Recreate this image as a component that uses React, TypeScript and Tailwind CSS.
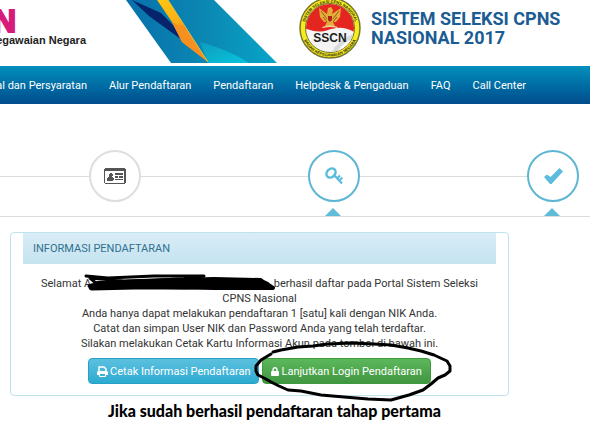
import type { ReactNode } from 'react';
import { FaLock } from 'react-icons/fa';

const menu = ['Alur Pendaftaran', 'Pendaftaran', 'Helpdesk & Pengaduan', 'FAQ', 'Call Center'];

function Ribbon() {
  return (
    <svg viewBox="0 0 152 63" className="h-[63px] w-[152px] shrink-0" aria-hidden="true">
      <defs>
        <linearGradient id="ribbon" x1="0" y1="0" x2="1" y2="0">
          <stop offset="0" stopColor="#0870ab" />
          <stop offset="0.5" stopColor="#0b86b2" />
          <stop offset="1" stopColor="#08a5c8" />
        </linearGradient>
        <linearGradient id="gold" x1="0" y1="0" x2="0.6" y2="1">
          <stop offset="0" stopColor="#fdc70f" />
          <stop offset="0.45" stopColor="#fbae17" />
          <stop offset="0.55" stopColor="#f58a1c" />
          <stop offset="1" stopColor="#f7931e" />
        </linearGradient>
        <linearGradient id="shine" x1="0" y1="0" x2="1" y2="1">
          <stop offset="0" stopColor="#0e9dbd" />
          <stop offset="1" stopColor="#07c3dc" />
        </linearGradient>
      </defs>
      <path d="M1 0H89L152 63H46Z" fill="url(#ribbon)" />
      <path d="M7 0L36 13L48 25L57 40L24 16Z" fill="#06246b" />
      <path d="M75 42Q105 50 124 63H83Z" fill="url(#shine)" />
      <path d="M32 0H43L83 62L57 42L47 22Z" fill="url(#gold)" />
      <path d="M47 22L62 30L83 62L57 42Z" fill="#f7901e" />
      <path d="M43 0L83 62" stroke="#d6c24a" fill="none" />
    </svg>
  );
}

function Emblem() {
  return (
    <svg viewBox="0 0 62 62" className="h-[62px] w-[62px] shrink-0" role="img" aria-label="SSCN">
      <defs>
        <clipPath id="disc"><circle cx="31" cy="31" r="24" /></clipPath>
        <path id="arcTop" d="M5.500 37A26 26 0 1 1 56.500 37" />
        <path id="arcBottom" d="M3 38A29 29 0 0 0 59 38" />
      </defs>
      <circle cx="31" cy="31" r="30" fill="#f7ec1a" stroke="#77772f" strokeWidth="1.5" />
      <circle cx="31" cy="31" r="24.5" fill="#f4f4f4" stroke="#77752a" strokeWidth="1" />
      <g clipPath="url(#disc)">
        <path d="M5 5H57V36C46 29 38 30 29 33C20 36 13 34 5 31Z" fill="#e52520" />
        <path d="M32 58Q34 46 56 36V50Q46 58 32 60Z" fill="#dadada" />
        <path d="M37 57Q44 44 55 42Q48 50 37 57Z" fill="#fff" />
      </g>
      {/* garuda */}
      <g fill="#e3ad3c">
        <path d="M29 11L32 10L34 13L33 17L42 11L41 20L37 25L34 25L36 29H26L28 25H25L21 20L20 11L28 17Z" />
        <path d="M23 30Q31 27 39 30L38 31Q31 29 24 31Z" fill="#f0d8a0" />
        <path d="M22 14L28 22M40 14L34 22M24 20L28 25M38 20L34 25" stroke="#8c4a18" strokeWidth="0.8" />
        <path d="M29 19H33V23L31 25L29 23Z" fill="#b52118" />
      </g>
      <text x="31" y="45" textAnchor="middle" fontSize="12" fontWeight="900" fill="#1d1d1d" className="font-['Liberation_Sans',sans-serif]">SSCN</text>
      <text fontSize="4" fontWeight="700" fill="#29291a" className="font-['Liberation_Sans',sans-serif]">
        <textPath href="#arcTop" startOffset="50%" textAnchor="middle">SISTEM SELEKSI CPNS NASIONAL</textPath>
      </text>
      <text fontSize="4" fontWeight="700" fill="#29291a" className="font-['Liberation_Sans',sans-serif]">
        <textPath href="#arcBottom" startOffset="50%" textAnchor="middle">BADAN KEPEGAWAIAN NEGARA</textPath>
      </text>
    </svg>
  );
}

function IdCardIcon() {
  return (
    <svg viewBox="0 0 22 16" className="h-4 w-[22px]" shapeRendering="crispEdges" aria-hidden="true">
      <path d="M1 0H21V1H22V15H21V16H1V15H0V1H1ZM1 3V15H20V3Z" fill="#555" fillRule="evenodd" />
      <path d="M6 5H8V6H9V8H8V9H9V10H10V12H9V13H3V10H4V9H5V6H6ZM11 5H19V7H11ZM11 8H14V10H11ZM15 8H19V10H15ZM11 11H19V12H11Z" fill="#555" />
    </svg>
  );
}

function KeyIcon() {
  return (
    <svg viewBox="0 0 19 18" className="h-[18px] w-[19px]" fill="none" stroke="#5bbcdc" aria-hidden="true">
      <ellipse cx="6" cy="6" rx="5" ry="4" transform="rotate(-45 6 6)" strokeWidth="2.5" />
      <path d="M9 8L17 16.500M14 13.500L17.500 10.500M12 11.500L15 8.500" strokeWidth="2.2" />
    </svg>
  );
}

function CheckIcon() {
  return (
    <svg viewBox="0 0 19 16" className="h-4 w-[19px]" fill="currentColor" aria-hidden="true">
      <path d="M0 9L3 6.500L6.500 9L15.500 0L19 3.500L7.500 16H6Z" />
    </svg>
  );
}

function PrintIcon() {
  return (
    <svg viewBox="0 0 11 11" className="h-[11px] w-[11px]" fill="none" stroke="currentColor" aria-hidden="true">
      <path d="M2 5.500V1H7L9 3V5.500" strokeWidth="1.5" />
      <path d="M1 5H10L11 6V9H0V6Z" fill="currentColor" stroke="none" />
      <path d="M2.500 7.500H8.500V10.500H2.500Z" fill="#3fb1d3" />
    </svg>
  );
}

function Step({ done, children }: { done?: boolean; children: ReactNode }) {
  return (
    <li className="relative">
      <div className={`flex h-[52px] w-[52px] items-center justify-center rounded-full border-2 bg-white ${done ? 'border-[#5fb6d4] text-[#5bbcdc]' : 'border-[#dedede]'}`}>
        {children}
      </div>
      {done && <span className="absolute -bottom-[14px] left-[17px] h-2 w-4 bg-[#62bcd7] [clip-path:polygon(50%_0,100%_100%,0_100%)]" />}
    </li>
  );
}

// name blacked out with a marker
function Redacted() {
  return (
    <span className="relative inline-block w-[187px] text-left">
      A
      <svg viewBox="0 0 194 20" className="absolute -top-[3px] left-0 h-5 w-[194px]" fill="none" stroke="#000" strokeLinecap="round" strokeLinejoin="round" aria-hidden="true">
        <path d="M2 3L24 5L70 3L120 3L100 6L40 8L6 5L13 11L5 13" strokeWidth="3" />
        <path d="M14 11L40 10L90 8L130 7L176 8" strokeWidth="6" />
        <path d="M8 14L50 13L100 13L130 12L182 12" strokeWidth="7" />
        <path d="M125 8L176 7L183 11L189 15L130 15L80 14" strokeWidth="4" />
      </svg>
    </span>
  );
}

export default function App() {
  return (
    <div className="bg-white pb-5 font-['Roboto','Liberation_Sans',sans-serif] text-[11px] leading-[15px] text-[#333]">
      <header className="flex h-[66px] items-start overflow-hidden">
        <div className="w-[125px] shrink-0 pt-1 font-['Liberation_Sans',Arial,sans-serif]">
          <p className="flex h-[29px] w-4 justify-end text-[32px] leading-[34px] font-black text-[#d81b7a] [-webkit-text-stroke:2px_#d81b7a]">N</p>
          <p className="flex w-[86px] justify-end whitespace-nowrap font-bold text-[#222]">egawaian Negara</p>
        </div>
        <Ribbon />
        <div className="-mt-[3px] ml-[22px] flex items-center">
          <Emblem />
          <h1 className="ml-[10px] text-[18px] leading-[19px] font-bold whitespace-nowrap text-[#1b5c93]">
            SISTEM SELEKSI CPNS<br />NASIONAL 2017
          </h1>
        </div>
      </header>

      <nav className="mr-4 flex h-[38px] items-center gap-[22px] bg-linear-to-b from-[#0590bd] to-[#024c8c] whitespace-nowrap text-white">
        <a href="#" className="flex w-[87px] shrink-0 justify-end overflow-hidden">al dan Persyaratan</a>
        {menu.map((item) => (
          <a key={item} href="#">{item}</a>
        ))}
      </nav>

      {/* Registration steps */}
      <div className="mr-4 border-b border-[#dcdcdc] pt-[46px] pb-[14px]">
        <ol className="flex items-center justify-between bg-[linear-gradient(#dcdcdc,#dcdcdc)] bg-[length:calc(100%-40px)_1px] bg-[position:left_center] bg-no-repeat pr-[11px] pl-[89px]">
          <Step><IdCardIcon /></Step>
          <Step done><KeyIcon /></Step>
          <Step done><CheckIcon /></Step>
        </ol>
      </div>

      <main className="mr-[97px] ml-[10px] pt-[15px]">
        <section className="rounded border border-[#bfe2ee] px-3 pb-[11px]">
          <h2 className="bg-linear-to-b from-[#d9edf7] to-[#c4e3f0] px-[10px] py-2 text-[#31708f]">INFORMASI PENDAFTARAN</h2>
          <div className="pt-3 text-center">
            <p>
              Selamat <Redacted /> berhasil daftar pada Portal Sistem Seleksi
              <br />CPNS Nasional
              <br />Anda hanya dapat melakukan pendaftaran 1 [satu] kali dengan NIK Anda.
              <br />Catat dan simpan User NIK dan Password Anda yang telah terdaftar.
              <br />Silakan melakukan Cetak Kartu Informasi Akun pada tombol di bawah ini.
            </p>
            <div className="mt-[7px] flex justify-center gap-[3px] whitespace-nowrap text-white">
              <button type="button" className="flex h-[26px] items-center gap-[2px] rounded border border-[#28a1c5] bg-linear-to-b from-[#5bc0de] to-[#2aabd2] px-2">
                <PrintIcon />
                Cetak Informasi Pendaftaran
              </button>
              <div className="relative">
                <button type="button" className="flex h-[26px] items-center gap-[2px] rounded border border-[#3e9a3e] bg-linear-to-b from-[#5cb85c] to-[#419641] px-2">
                  <FaLock className="h-[9px] w-2" />
                  Lanjutkan Login Pendaftaran
                </button>
                <svg viewBox="251 338 202 66" className="pointer-events-none absolute -top-5 -left-[10px] h-[66px] w-[202px] max-w-none" fill="none" stroke="#000" strokeWidth="3" strokeLinecap="round" strokeLinejoin="round" aria-hidden="true">
                  <path d="M272 352L280 350L297 347L312 346L327 344L350 343L373 344L390 345L407 348L420 351L433 355L446 361L449 366L449 371L444 375L437 378L430 384L422 390L408 395L390 400L367 399L343 397L320 395L300 391L287 390L278 386L270 382L263 378L257 375L255 371L255 366L260 360L270 354" />
                </svg>
              </div>
            </div>
          </div>
        </section>
      </main>

      <p className="ml-[108px] pt-1 font-['Lato',sans-serif] text-base leading-[22px] font-black whitespace-nowrap text-black">
        Jika sudah berhasil pendaftaran tahap pertama
      </p>
    </div>
  );
}
